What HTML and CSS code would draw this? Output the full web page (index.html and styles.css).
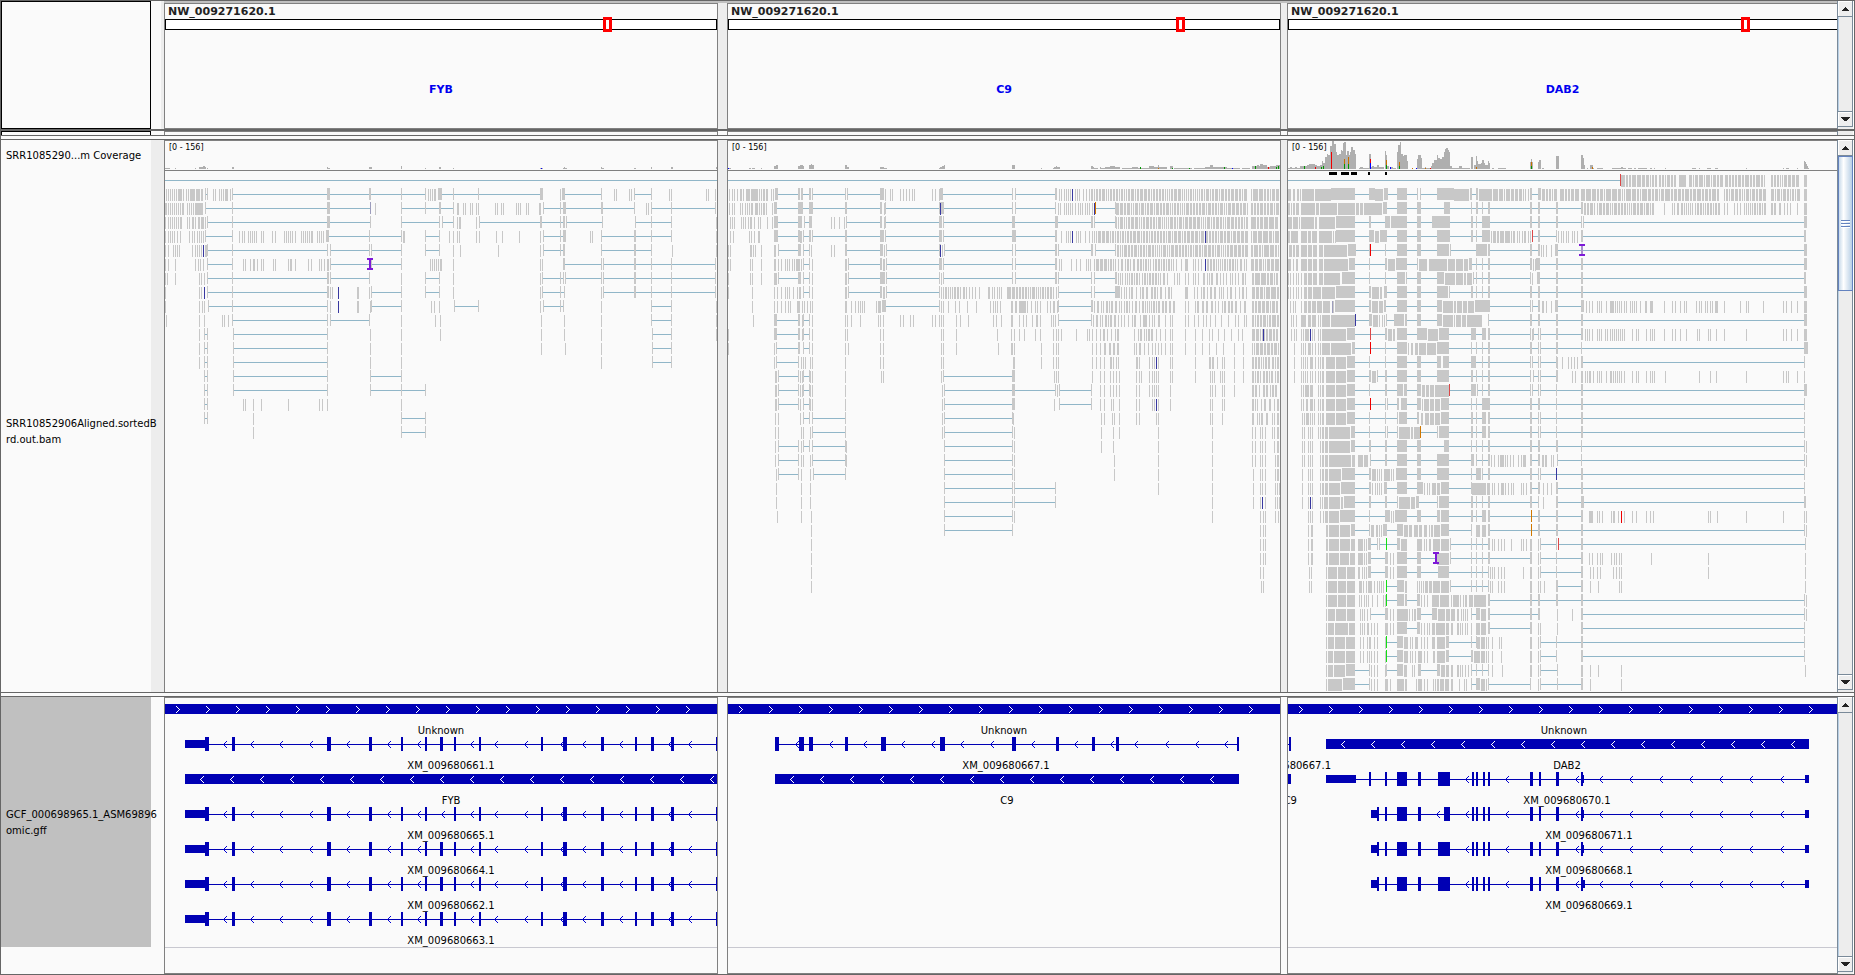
FILE: index.html
```html
<!DOCTYPE html>
<html lang="en">
<head>
<meta charset="utf-8">
<title>Genome browser</title>
<link rel="stylesheet" href="styles.css">
</head>
<body>
<main class="browser">

  <section class="band band-header">
    <div class="corner"></div>
    <div class="gutter"></div>
    <div class="panels">
      <div class="panel">
        <div class="chrom">NW_009271620.1</div>
        <div class="ideogram"><span class="locus" style="left:79.5%"></span></div>
        <div class="gene-name">FYB</div>
      </div>
      <div class="gap"></div>
      <div class="panel">
        <div class="chrom">NW_009271620.1</div>
        <div class="ideogram"><span class="locus" style="left:81.3%"></span></div>
        <div class="gene-name">C9</div>
      </div>
      <div class="gap gap-narrow"></div>
      <div class="panel panel-last">
        <div class="chrom">NW_009271620.1</div>
        <div class="ideogram"><span class="locus" style="left:82.5%"></span></div>
        <div class="gene-name">DAB2</div>
      </div>
    </div>
    <div class="scroll">
      <button class="arrow" aria-label="Scroll up"><svg width="7" height="4"><path d="M3 0h1v1h1v1h1v1h1v1H0V3h1V2h1V1h1z"/></svg></button>
      <div class="rail"></div>
      <button class="arrow arrow-down" aria-label="Scroll down"><svg width="9" height="4"><path d="M0 0h9v1H8v1H7v1H6v1H3V3H2V2H1V1H0z"/></svg></button>
    </div>
  </section>

  <section class="band band-strip">
    <div class="corner"></div>
    <div class="gutter"></div>
    <div class="panels">
      <div class="panel"></div><div class="gap"></div>
      <div class="panel"></div><div class="gap gap-narrow"></div>
      <div class="panel panel-last"></div>
    </div>
    <div class="scroll"></div>
  </section>

  <div class="divider"></div>

  <section class="band band-reads">
    <div class="names">
      <div class="name name-coverage">SRR1085290...m Coverage</div>
      <div class="name name-reads">SRR10852906Aligned.sortedB<br>rd.out.bam</div>
    </div>
    <div class="gutter"></div>
    <div class="panels">
      <div class="panel"><svg class="track" id="reads-fyb"></svg></div>
      <div class="gap"></div>
      <div class="panel"><svg class="track" id="reads-c9"></svg></div>
      <div class="gap gap-narrow"></div>
      <div class="panel panel-last"><svg class="track" id="reads-dab2"></svg></div>
    </div>
    <div class="scroll">
      <button class="arrow" aria-label="Scroll up"><svg width="7" height="4"><path d="M3 0h1v1h1v1h1v1h1v1H0V3h1V2h1V1h1z"/></svg></button>
      <div class="rail"><div class="thumb"><i></i><i></i><i></i></div></div>
      <button class="arrow arrow-down" aria-label="Scroll down"><svg width="9" height="4"><path d="M0 0h9v1H8v1H7v1H6v1H3V3H2V2H1V1H0z"/></svg></button>
    </div>
  </section>

  <div class="divider"></div>

  <section class="band band-genes">
    <div class="names">
      <div class="name name-genes">GCF_000698965.1_ASM69896<br>omic.gff</div>
    </div>
    <div class="gutter"></div>
    <div class="panels">
      <div class="panel"><svg class="track" id="genes-fyb"></svg></div>
      <div class="gap"></div>
      <div class="panel"><svg class="track" id="genes-c9"></svg></div>
      <div class="gap gap-narrow"></div>
      <div class="panel panel-last"><svg class="track" id="genes-dab2"></svg></div>
    </div>
    <div class="scroll">
      <button class="arrow" aria-label="Scroll up"><svg width="7" height="4"><path d="M3 0h1v1h1v1h1v1h1v1H0V3h1V2h1V1h1z"/></svg></button>
      <div class="rail"></div>
      <button class="arrow arrow-down" aria-label="Scroll down"><svg width="9" height="4"><path d="M0 0h9v1H8v1H7v1H6v1H3V3H2V2H1V1H0z"/></svg></button>
    </div>
  </section>

</main>
<script src="tracks.js"></script>
</body>
</html>
```

FILE: styles.css
```css
* { box-sizing: border-box; }

body {
  margin: 0;
  background: #fafafa;
  color: #000;
  font-family: "DejaVu Sans", Verdana, sans-serif;
  font-size: 10px;
}

.browser {
  display: flex;
  flex-direction: column;
  min-height: 100vh;
  border: 1px solid #666;
}

.band { display: flex; }
.band-header { height: 130px; border-bottom: 2px solid #666; }
.band-strip { height: 4px; overflow: hidden; }
.band-reads { flex: 1 0 552px; }
.band-genes { height: 277px; }

.divider {
  height: 5px;
  border-top: 1px solid #666;
  border-bottom: 1px solid #666;
}

.corner {
  flex: 0 0 150px;
  border: 1px solid #000;
}
.band-strip .corner { border-bottom: 0; }

.gutter { flex: 0 0 13px; }
.band-header .gutter { border-right: 3px solid #ededed; }
.band-reads .gutter { background: #ededed; }

.panels {
  flex: 1;
  display: flex;
  min-width: 0;
}
.band-header .panels { border-top: 2px solid #c0c0c0; }

.panel {
  flex: 554 1 554px;
  min-width: 0;
  border: 1px solid #808080;
  overflow: hidden;
}
.panel-last { flex: 550 1 550px; border-right: 0; }
.band-strip .panel { border-bottom: 0; }
.band-reads .panel { border-bottom: 0; }

.gap { flex: 0 0 9px; }
.gap-narrow { flex-basis: 6px; }
.band-header .gap,
.band-reads .gap { background: #ededed; }

.chrom {
  padding-left: 3px;
  height: 15px;
  line-height: 15px;
  font-size: 11px;
  font-weight: bold;
  color: #222;
}
.ideogram {
  position: relative;
  height: 11px;
  border: 1px solid #000;
  background: #fff;
}
.panel-last .ideogram { border-right: 0; }
.locus {
  position: absolute;
  top: -3px;
  width: 9px;
  height: 15px;
  border: 3px solid #f00;
}
.gene-name {
  margin-top: 52px;
  line-height: 16px;
  font-size: 11px;
  font-weight: bold;
  text-align: center;
  color: #0000f0;
}

.names {
  flex: 0 0 150px;
  width: 150px;
  z-index: 1;
  display: flex;
  flex-direction: column;
}
.name {
  align-content: center;
  padding-left: 5px;
  line-height: 16px;
  white-space: nowrap;
}
.name-coverage { height: 31px; }
.name-reads { flex: 1; }
.name-genes { height: 250px; padding-top: 2px; background: #c0c0c0; }

.track {
  display: block;
  width: 100%;
  height: 100%;
  shape-rendering: crispEdges;
}
.track text { font-size: 10px; }
.track .range { font-size: 8px; }

.scroll {
  flex: 0 0 17px;
  display: flex;
  flex-direction: column;
  padding: 0 0 2px;
  border-left: 1px solid #7a8a99;
  background: #ededed;
  border-right: 1px solid #fff;
}
.arrow {
  height: 16px;
  padding: 0;
  display: flex;
  align-items: center;
  justify-content: center;
  border: 1px solid #7a8a99;
  border-width: 0 1px 1px 0;
  background: #eee;
  box-shadow: inset 1px 1px #fff;
}
.arrow-down { border-width: 1px 1px 1px 0; }
.arrow svg { fill: #222; display: block; }
.rail {
  flex: 1;
  border-right: 1px solid #7a8a99;
  border-left: 1px solid #b8cfe5;
}
.thumb {
  height: 135px;
  margin: 0 -1px;
  display: flex;
  flex-direction: column;
  align-items: center;
  justify-content: center;
  gap: 1px;
  border: 1px solid #6382bf;
  background: linear-gradient(to right, #c8daea, #fff 35%, #b8cfe5);
}
.thumb i {
  width: 9px;
  height: 2px;
  border-top: 1px solid #6382bf;
  background: #fff;
}
```

FILE: tracks.js
```js
const NS = "http://www.w3.org/2000/svg";
const COLORS = {
  read: "#c8c8c8", intron: "#90b6c8", cover: "#afafaf",
  b: "#3838a0", r: "#dc4848", R: "#f00000", o: "#d07800", g: "#14e014", v: "#9c9cbc",
  G: "#009600", O: "#c87000", B: "#0000ff"
};

function add(svg, tag, attrs, text) {
  const el = document.createElementNS(NS, tag);
  for (const k in attrs) el.setAttribute(k, attrs[k]);
  if (text) el.textContent = text;
  svg.appendChild(el);
}
function rect(svg, x, y, w, h, fill) {
  add(svg, "rect", { x, y, width: w, height: h, fill });
}
/* Converts bin positions to pixels of one panel. */
function scaler(origin, scale, left) {
  return u => Math.floor(origin + u / scale - left + 0.2);
}
function seeded(seed) {
  let s = seed * 7919 + 13;
  return n => { s = (s * 1103515245 + 12345) % 2147483648; return Math.floor(s / 65536) % n; };
}

/* Row syntax: "10" tick, "10-20" block, "10~30" spliced, "10%90:7" packed reads,
   a letter after a tick gives the mismatch colour. */
function drawRow(svg, text, y, px, seed) {
  const marks = [];
  let lines = "", blocks = "";
  for (const token of text.trim().split(/\s+/)) {
    if (token.includes("%")) {
      const [range, d] = token.split(":");
      const [a, b] = range.split("%").map(v => px(+v));
      const next = seeded(seed + a);
      let x = a;
      while (x < b) {
        const w = Math.min(b - x, d >= 9 ? 1 + next(5) : d >= 8 ? 1 + next(4) : d >= 7 ? 1 + next(3) : d >= 5 ? 1 + next(2) : 1);
        blocks += `M${x} ${y - 5}h${w}v12h-${w}z`;
        x += w + (d >= 7 ? 1 : d >= 6 ? 1 + (next(4) ? 0 : 1) : d >= 5 ? 1 + next(3) : 1 + next(6));
      }
      continue;
    }
    const parts = token.split("~");
    const dy = parts.length > 1 ? 6 : 5;
    let last = null;
    for (const part of parts) {
      const m = part.match(/^(\d+)(?:-(\d+))?([a-zA-Z]?)$/);
      const a = px(+m[1]), b = Math.max(a + 1, m[2] ? px(+m[2]) : 0);
      if (last !== null) lines += `M${last} ${y}h${a - last}v1h-${a - last}z`;
      if (m[3]) marks.push([a, m[3], dy]);
      else blocks += `M${a} ${y - dy}h${b - a}v12h-${b - a}z`;
      last = b;
    }
  }
  add(svg, "path", { d: lines || "M0 0", fill: COLORS.intron });
  add(svg, "path", { d: blocks || "M0 0", fill: COLORS.read });
  for (const [x, c, dy] of marks) rect(svg, x, y - dy, 1, 12, COLORS[c]);
}

function drawReads(id, left, tiles, cover, spots, cpx) {
  const svg = document.getElementById(id);
  const top = 141;
  for (const [a, b, h] of cover) {
    const x = cpx(a);
    rect(svg, x, 169 - top - h, Math.max(1, cpx(b) - x), h, COLORS.cover);
  }
  for (const [a, low, high, c] of spots) rect(svg, cpx(a), 169 - top - high, 1, high - low, COLORS[c]);
  rect(svg, 0, 170 - top, "100%", 1, "#808080");
  for (const tile of tiles)
    tile.rows.forEach((row, i) => {
      const n = tile.first + i;
      if (row) drawRow(svg, row, 180 + 14 * n - top, scaler(tile.origin, tile.scale, left), n);
    });
  add(svg, "text", { x: 4, y: 9, class: "range" }, "[0 - 156]");
  return svg;
}
function insertion(svg, x, row, stem) {
  const y = 180 + 14 * row - 141 - 6, c = "#7d19d7";
  rect(svg, x, y, 6, 2, c);
  rect(svg, x, y + 10, 6, 2, c);
  rect(svg, x + 2, y + 2, 2, 8, stem || c);
}

/* ---- FYB ---- */
const fybLeft = [
 "400~1830",
 "420 425 430-433 436 441 446 450-460 464 471 476 481-493 497-506 508-515 518~525 540 545 555 559 564 571-577 583 588~827-836~934-940~1015~1076 1083 1088 1093 1098-1104 1108-1118~1147-1150~1210-1213~1367-1373",
 "417-422 425 431 436 441 446 450 455 460-465 474 479 485 490 495-515 518-521~588-591~827-836~936v 949 1015-1018~1076~1111-1117~1147-1150 1157-1162 1171 1176 1189 1194 1204 1209-1213 1253 1258 1268 1273 1305 1310 1315 1331 1336 1363-1368 1373~1416",
 "417-421 425 430 435 440 446 450 455 459 474 479 486 490 495 501 505 510-516 519 525~588-591~827-836~936 1015-1018~1112-1114 1118~1147-1150 1156 1161 1164 1205 1212~1367-1372~1416",
 "417-421 425 430 437 442 449 455 479 486 492 498 503 508 513 518~588-591 605 613 618 627-631 632 637-640 642-645 648 661 666 689 696 719 724 729 733-737 740 747 762 767-770 772 777 781 788-793 803 808 813 818 824-834~934-937~1015 1020-1024 1076~1112 1137 1147 1157 1162-1165 1205 1212 1255-1258 1271 1314 1367 1373~1416",
 "417-421 426 439 444 449 454 487 494 499 504 509 513b 519-524 525~588~827-831 836~934 939~1015 1076~1111-1114 1147 1164 1260 1367 1373~1416",
 "417-421 426 444 494 502-505 507-510 514 525~588 616 621 632-636 640-645 651 661 666 691 696 729-732 735-738 747 780 787 808 813 820 827-832 836~940~1015 1088 1093 1098 1103 1108 1113 1117 1147 1367 1371",
 "417-421 423 444 504 509 517 525~588~827-832 836~934-937 1015 1076~1111 1147 1367 1371~1416",
 "417 504 510 517b 525~588~827-832 835 841 856b 904-908 934 939~1015 1076~1111 1147 1367 1371~1416",
 "417 504 511 517 527~588~829 836 856b 904-908 936 939~1015 1090-1094 1099 1111 1150~1210 1367 1373~1416",
 "421 504 517 562 568 578 588~829 836~934-937 1015 1102 1114 1369"
];
const fybRight = [
 "",
 "1 6-17~124-128 163 169 208 214 223~274 328 334 439 445 466",
 "0~10-19~124-130~223 259 265 274~334-338~467-470",
 "0~10-15 18~126 226~274~334-338 470",
 "0~10-18 91 97 124-128~223-228~274~334-338 470",
 "0~10-17 124-128~223-228~274 337 470",
 "10-17~124 130~223-228~274~334-338~467-470",
 "0~10-14 17~124 130~223-228~274~334-338~467",
 "0~12 124 130~223-228~274~334-338~467",
 "0~10-14 124 274~334 469",
 "13 124 274~334 469"
];
const fybLow = [
 "429 439~446 501~703 796-798 862 946 1163 1212 1292 1401~1441 1539",
 "429 439~446 501~703 796 862 1163 1215 1292 1401~1441",
 "429 439~446 501~703 796 862 1292 1401~1441",
 "439~446 501~703 796~862",
 "439~446 501~703 796~862~914",
 "439~446 523 527 545-547 562 620 686 693 703 862",
 "439~446 545 862~914",
 "545 862~914"
];
const fyb = drawReads("reads-fyb", 165, [
  { first: 0, origin: 0, scale: 2.529, rows: fybLeft },
  { first: 0, origin: 560, scale: 3, rows: fybRight },
  { first: 11, origin: 0, scale: 2.148, rows: fybLow }
], [[417,430,1],[444,446,1],[494,496,1],[503,515,2],[515,518,3],[518,522,2],[525,528,1],[588,592,2],[827,831,2],[831,836,1],[934,941,2],[1014,1018,3],[1075,1077,1],[1111,1117,2],[1147,1150,1],[1367,1375,1],[1424,1434,1],[1427,1430,2],[1520,1524,2],[1524,1528,1],[1604,1608,1],[1646,1649,2],[1697,1703,2],[1811,1813,2]],
 [[1369,0,1,"B"]], scaler(0, 2.529, 165));
insertion(fyb, 202, 6);

/* ---- C9 ---- */
const c9Rows = [
 "10~1560",
 "26 34 40 48 56-61 64-68 72 76-82 86-89 90-96 98-104 108 114 118 122 126 130 141 148 153-160~216-220 225-230~247-250 255~345 350~442-451 455 469 474 496 504 512 521 529 535 584 592 603 607-615~805-808 812~923-929 933 939 946 952 957 963 969b 977 984 989 1000 1008 1016 1022%1452:7 1461%1540:9",
 "26 34 40 56 62 69 75 80 86-91 96 101-104 108 114 118 123 128 144 150-159~216-220 222-228~247-256~345-351~442-447 451 455~603-616~805-808 812~923-926 931 937 946 952 958 963 969 978 986 992 998 1004 1011 1016 1024 1030b 1033o~1088 1090%1452:7 1461%1540:9 606b",
 "29 34 40 59 65 70 77 82-90 93 104 110 129 145 150-160~216-227 231~247-255 307 315 328 342 347-351~442-447 451 455~603-612 614-618~805-811~923-932~1022-1026 1030~1088 1090%1452:7 1461%1540:9",
 "29 36-40 81 87 93 106-112 150-160~216-220 222-227 229~247-250 255~345-351~442-451 455~603-612 615~805-811 812~923-929 939 953 958 965 969b 979 986 991 1005 1017 1024 1029 1036%1452:7 1335b 1461%1540:9",
 "23 29 82 87 92 97 114 150-156 160~216-223 229~247 252 307 315 345-350~442-450 453 457~603-610 612 617~805-808 812~923-929 932~1022-1028 1032~1088 1093%1452:7 1461%1540:9 606b",
 "23 29 82 89 114 150-156 160 170 180 186 192 198 205 210-222 225 229~247 255 345-350 354~442-447 450-454 457~603-612 615-618~805-808 812~923-929 933 939 967 980 990 1008 1014 1020 1029%1090:7 1096%1260:6 1270 1281-1288 1302 1308 1317 1325 1335b 1341%1452:6 1461%1540:9",
 "23 82 89 114 150-157 160~216-223 229~247 255 345-350 354~442-454 457~603 608 614-618~805-808 812~923-929 932~1022-1025 1030~1088-1092 1097%1240:6 1250 1257 1264 1281 1288 1302 1308 1315 1330%1452:5 1463%1540:9",
 "23 89 150 157 169 180 185 191 202 213 219-223 229~247 255 345-350 354~442-447 450-454 457~603 610%657:6 662%697:6 702 714 738-743 749 755 763 769 775 791-801 803%920:7 925-929 932~1022-1025 1030~1088-1100 1104%1252:5 1281-1288 1304%1452:5 1463%1540:9",
 "89 150 157 169 180 188 194 213-222 226 233 240 248 255 345-350 362 371-375 381 387 392 397 430 436-445 447-457~603 609 614 628 647 657 681 705 744 752 758 764 772 800-806 813-818 822-842 846 857 867 872 880 900 909 917-923 928 932~1022-1027 1031%1252:6 1281 1288 1307%1452:5 1463%1540:8",
 "92 150-157~216-222 226 229~247 255 345 350 362 386 436 441 449 496 504 524 532 584 592 603 608 614 650 661 683 752 761 775 802-808 824 835 843 858 869 874 881 912 918 923 930~1022 1026%1090:6 1096 1105 1112 1122 1134 1140-1146 1155 1165-1175 1180%1220:5 1226 1240 1245 1281 1288 1304%1452:4 1463%1540:8",
 "23 150-157~216-222 226 229~247 255 345 350 442 449 608 614 650 763 802 810 824 837 868 881 918 926 932 939 980 1011 1016 1024 1034 1046%1098:5 1140%1220:5 1226 1240 1245 1281 1308 1328 1346%1452:4 1463%1540:7 1495b",
 "23 150 155-159~216-222 229~247 255 345 353 442 449 608 614 650 766 802-806 810 884 918 926 932 1024 1034 1046%1098:5 1140%1200:5 1206 1214 1225 1240 1245 1281 1308 1328 1346%1400:4 1415 1440 1463%1540:7",
 "150 155-159~216 224 229 235 248 255 345 442 449 609 614 806-811 884 918 926 932 1024 1034 1046 1056 1074-1078 1083 1090 1096 1144 1149 1154 1180 1189 1194 1200b 1206 1240 1245 1308 1346%1372:5 1383 1388 1415 1440 1463%1540:6",
 "152-157 160~216 222 226 229~247 249 255 345 444 449 609 614~805-811 920 926 932 1024 1046 1056 1075 1083 1090 1099 1146 1153 1160 1180 1189 1194 1200 1206 1240 1245 1308 1349 1354 1360 1376 1383 1388 1415 1440 1463%1540:6",
 "152-157 160~216 221 226 229~247 249 255 345 612 617~805-811~923 927 934~1022 1046 1058 1075 1083 1090 1099 1146 1153 1181 1189 1194 1200 1206 1240 1349 1354 1362 1383 1388 1415 1465%1540:5",
 "152-157 160~216 221 229~247 249 255 345 612 617~805-811 920 934~1022 1046 1058 1077 1083 1099 1146 1153 1190 1194 1200b 1206 1240 1349 1354 1383 1388 1465%1540:5",
 "152 160 221 229~247 255~345 612 617~805 808 1049 1057 1079 1084 1099 1146 1153 1200 1206 1349 1354 1383 1465%1510:5 1519 1525 1534-1539",
 "152 160 224 229 248 255~345 612 617~805 810 1049 1082 1099 1206 1354 1465 1473 1485-1488 1493 1500 1519 1525 1533-1538",
 "152 160~216 224 229~247 255~345 348 617~805 810 1049 1082 1206 1354 1465 1473 1485-1488 1493 1500 1525 1533-1538",
 "152 160~216 224 229 248 255~345 348 617~805 810 1085 1206 1354 1465 1473 1487 1493 1500 1528 1534-1538",
 "155 160~216 224 249 258~345 617~805 810 1085 1206 1354 1468 1487 1493 1500 1528 1534-1538",
 "155 224 249 617~805 810~923 1206 1354 1468 1487 1493 1500 1528 1533 1539",
 "155 224 249 617~805 810~923 1354 1468 1487 1493b 1500 1528 1533 1539",
 "158 224 251 617~805 810 1354 1487 1495 1500 1528 1537",
 "251 617~805 1487 1495 1500",
 "251 1487 1495 1500",
 "251 1487 1495 1500",
 "251 1487 1495",
 "251 1490 1495"
];
drawReads("reads-c9", 728, [{ first: 0, origin: 720, scale: 2.751, rows: c9Rows }],
 [[24,30,1],[80,85,1],[88,96,1],[113,116,1],[149,155,3],[154,161,4],[215,222,3],[221,228,4],[228,231,3],[246,250,4],[250,254,5],[254,259,4],[345,349,4],[349,355,2],[441,453,2],[453,459,1],[602,611,1],[607,616,2],[611,616,3],[616,619,4],[803,813,4],[883,886,1],[916,922,1],[921,929,2],[925,929,3],[929,935,2],[1021,1026,3],[1026,1030,2],[1030,1042,1],[1045,1050,2],[1050,1060,1],[1060,1100,2],[1075,1088,3],[1106,1135,1],[1135,1150,2],[1150,1180,1],[1180,1195,3],[1195,1230,2],[1205,1208,4],[1238,1246,3],[1250,1300,1],[1305,1335,1],[1335,1345,2],[1345,1350,2],[1350,1358,4],[1358,1395,2],[1395,1430,1],[1437,1458,1],[1463,1485,3],[1478,1483,4],[1485,1495,5],[1495,1505,4],[1505,1515,2],[1515,1530,3],[1530,1541,4]],
 [[23,0,1,"B"],[1155,0,2,"G"],[1205,0,1,"O"],[1243,0,1,"G"],[1291,0,1,"G"],[1387,0,2,"G"],[1409,0,1,"B"],[1472,0,3,"G"],[1508,0,2,"R"],[1531,0,2,"G"],[1536,0,3,"G"]],
 scaler(720, 2.751, 728));

/* ---- DAB2 ---- */
const dabRows = [
 "10~928r 931%1030:8 1033%1080:7 1088-1107 1115%1210:8 1213%1325:8 1339%1420:7 1429-1439",
 "22 26-30 35-38 40-43 46-52 55 60-93 95-131 133-139 141-204~243-259 261-283 285-294~319-346~374 382~428-474 476-499 501-516 518-525~534-541 543-579 581%660:9 664 670 676 682-689~704-712 714%760:9 764%820:8 821%1200:9 1211%1325:7 1339%1420:7 1429-1439",
 "22-28 30-33 36-43 45-52 57-95 98-108 111-155 158-204 207-217 220-226 229-256 258-280 283-292~319-346~374-384~447-465~521-525~534-540~551~567-573~682-687~704-711~753-760~821-828 830%860:7 864%1020:7 1048 1069%1200:6 1211 1220 1238 1248 1255 1265%1325:6 1339%1396:5 1412 1429-1439",
 "22-33 35-49 52 57-93 95-103 106-150 153-204~243-248~286-300 303-346~374-384~414-464~521-526~534~551-573~682-687~704-711~753-760~821 827~1430-1439",
 "22-29 31-38 40-49 57-74 76-86 88-103 106-142 145 150 153-205~243-256 259-270 273-292~319-346~374-384~428-464~521-526~534~551-573 575-578 581-590 593-598 600-611 614-627 630 635-643 648 653 660 665-671 676 683 688r~704-711~753 758 767 772 781 786 796 803 811 821-828~1429-1436",
 "24-33 35-41 44-52 57-74 76-88 91-103 106-117 120-184 187-206~243 286-291~319-346~374-384~428-462 465~534-564 567-573~682-689~704-709 713 719 725 740 750-760~821-828~1429-1437 206~246R~286",
 "22-32 36 44-49 57-74 76-87 90-103 106-117 120-185 188-206~243~286-292 295-314 317-346~374-376 379-403 406-457 459-479 482-501 503-514 517-525~534~551~567-573~682-687 690 695 700-711~753-760~821-828~1429-1439",
 "22 27 36 44 50 57-62 65-74 76-87 90-103 106-117 120-165 169-206~243~286-291~319-341 344-348~374-384~428-449 452-479 482-499 502-507 510-525 528~534-539~551~567-573~682 687-692 701-709~753-760~821-828~1429-1436",
 "22 27 36 44 50 57-62 65-74 76-87 90-113 116-150 153-204~243-250 253-270 273-280 284-292~319-346~374-384~428-459 462-465~521-526~534-539~551~567-573~682-687~704-711~753-760~821-828~1429-1437",
 "28 36 42 57-62 65-74 76-86 88-98 101-115 118-138 143v 146 151-204~243-250 253-267 270-282 285-291~319-346~374-384~428-442 444-472 474-481 484-496 499-510 513-530 533-573~682 687~704-711 714 719 725 740 750-760~821-831 834 844 851 866 871 877 890 901-911 914 919 926 932 939 944 955 962 967 972 983 995 1000 1010-1019 1048 1070 1079 1092 1102 1108 1135 1144 1149 1160 1166 1173 1179 1187-1196 1212 1256 1271 1278 1318 1373 1382 1393 1411 1429-1437",
 "32 37 44 57 62-73 76-85 88-98 104 110 115-136 139-204 206b~243-251 254-268 272 279 285 291~311-338 341-346~374-384~428-442 444-472 474-479 482-494 497-508 511-553 568~682-687~704-711~753-760~821-828~1429-1437",
 "32 39 44 57 64 70-80 83b 88 94 104 110 115-180 183-206~246r~286-292 295-305 308-315 319-346~374-401 404-431 434-463~521-536~551-563 567-573~682 687 691~704 709~753-760~821-828 833 838 844 851 866 871 877 886 892 901 907 912 918 923 928 934 940 960 971 977 999 1010 1015 1020 1048 1070 1078 1092 1108 1138 1144 1168 1174 1190 1212 1271 1373 1382 1395 1411 1429-1437",
 "39 57 63 69 76-85 88 96 104 110 115-136 139-194 197-206~246R~286-291~319-346 349 357-363 368-378 380-398 401-425 428-463~521-525~534~551-555~567-573~682-689~704 710~753-760~821-825~1429-1440",
 "39 57 63 69 75 82-92 96 104 110 115-122 125-150 153-180 183-206~243~286-291~319-348~374-384~428-441 444-463~521-536~551~567-573~682 688~704 710~753 757 770 786 795 803 811 821-828~1429-1433",
 "39 57 63 69 75 82 88 96 104 110 115-122 125-150 153-180 183-206~243-250 253-262 265-269~286-292~319-346~374-384~428-463~521-526~534~551-555~567-573~682 691~704 710~753-760 796 805 821-828 833 838 844-850 854 866 871 877 890 901-906 910 914 919 926 932 939 960 971 977 999 1010 1015 1021 1051 1144 1174 1190-1193 1271 1373 1382 1387 1411 1429-1433",
 "57 63 69-80 83-92 104 110 115-122 125-150 153-180 183-206~243~286-293~319-335 338-348~374-384 388-395 398-408 411-420 423-461 463r~521-534 538~551~567-573~682 688~704 710~753-757~821-828~1429-1437",
 "57 63 71-76 82-90 94 104 110 115-122 125-150 153-180 183-206~246R~286 293~319-326 330-348~374-384 387 394-408 411-420 423-438 441-463~521-525~534~551-573~682-689~704-710~753-757~821-828~1429-1433",
 "61 67 71-79 83 88 94 104 110 115-122 125-150 153-180 183-206~243~286-291~319-322 325-348~374-381 385-392 395-408 411-420 423-438 441-463~521-526~534~551-563 567-573~682-687~704 710~753-757~821-826~1429-1433",
 "61 67 77 83 88 104 110 115-121 124-131 134-192 195-206~243~286 293~319-322 325-354 357-364 367-382 383o~428 434-463~521-526~534~551-563 567-573~682-687~704 710~753-757~821-826~1429-1433",
 "61 67 77 83 88 110 115-121 124-131 134-192 195-206~243-248~286-292~319-346~374-384~447-463~521-525~534~551~567-573~682-687~704-711~753-760~821-825~1429 1435",
 "61 67 77 83 88 110 115-121 124-131 134-194 197-206 213-226 229-241 246~286-293~319-346~374-384~428-463~521-531 534-539~551~567-573 576 584 594 602-611 614 620 628 636 650 658 663-671 682-689~704-711 714-720 723-728 740 746 755-760~821-825~1429 1435",
 "61 77 83 88 110 115-121 124-131 134-166 169-204~243-250 253-262 265 271 277 284-300 303 309 316-346~374-384~428 431-463~521-525~534-548 551-555~567-573~682-687~704 710~754b~821-828~1429-1433",
 "61 77 83 88 110 115-121 124-131 134-164 167-204~243-250 253 259 265 271 277 285-293~319-346~374-390 393 401 408 416-425 428-438 441-463~521 525-562 565-573 578 584 594 603-611 614 622 632 636 658 664 672 682-689~704-711 718 729 740 753-760~821-828~1429-1433",
 "61 77 83b 88 110 115-118 121-131 134-164 167-172 175-206~243-248~286-293~319-322 325-354 357-369 372-381~428-431 434-463~521-526~534~551~567-573~682-687~704 718 753-760~821-831~1429-1436",
 "77 83 88 110 118 124-131 134-162 165-206~243~286-300 303 309 315-346~374-384~428-438 441-463~521-526~534~551-563 567-573~685o~704-711~753-760~821-828 844-854 866 871 879 904 909-915 922 931R 939 962 971 999 1010 1018 1168 1174 1193 1271 1373 1430 1435",
 "77 86-90 125-131 134-161 164-191 194-206~243 249-258 262-267 270 276 283-292~319-335 338-349 352-362 365-378 381-389 393-403 406-411 413-417 420-436 439-463~521-525 534-547 551-563 567-573~685o~704-711~753-760~821-828~1430 1435",
 "77 86-90 125-131 134-161 164-191 194-206 213-226 229 235 241-248~265 271~290g~319-328 331-346 374-384 386 393 400 407-412 417-436 439-463 465~521-525~534-539~551~567-573 578 584 594 603 611 631 658 663 672 682-689 704 711~753 759r~821-828~1433-1436",
 "77 86-90 125-131 134-161 164-189 192-205 213-226 229 235 241-248~286-296 300 308 319-346~374-384~424 428-461 465~521-525~534-539~551~567-573~682-687 704 709~753-757~821-828 844 851 866 873 879 904 912 918 925 931 1013 1168 1433-1436",
 "80 86 125-128 131-155 158-180 183-205 213-220 224 230 236 241-248~286-296 300 308 319-346~374-384~431-461~521-525~534-539~551~567 573 578 584 594 603 612 664 682-687 704 711~753-757~821-828 846 854 866 873 909 917 925 931 1168 1433-1436",
 "80 86 125-128 131-155 158-180 183-205 215-224 228 236 241-253 256 264 271 277 283 290g~319-338 341-346 374 380 386 392 397-405 408-414 417-436 439-463 465~521-525~534-539~551~567 573 578 595 603 612 682-687 704 711 721 753-760~821-828 846-850 868 925 931 1433-1436",
 "125-128 131-155 158-180 183-205 215 221 229 236 241 253 265 282 287 290g~319-338 341-348~374-382 386 393 401-405 414-435 438-463 466 473-490 493 500 505-512 515-528 531-563 567-573~682-687~704-711~753-760~821-828~1430 1435",
 "125-128 131-150 153-180 183-205 219 225 231 237 246~286-296 300 308 319-349 352 360 365-372 375-384~414-428 431-450 453-464 467-478 483-490 494 500 505 511 521-525~534-547 550-562 567-573~682-687~704-711 755 797 821-828~1430 1435",
 "125-128 131-147 150-185 188-205 219 225 231 237 241 249 257 265 286-296 300 308 319-348~374-382 386 393 401 407 414-424 427-450 453-463 466-473 483-490 493 498 505 511 521-525 534-545 548-562 568-573~682-687 704 710 755 821-828~1430",
 "125-128 131-147 150-177 180-205 219 226 237 243-250 257 265 286 290g~319-335 338-349 356 362 368-378 385 393 401 414-424 428-450 453-463~521-525~534 538-547 550-559 562 568 578 598 603 682-687 704 710~753-757~821-828~1430",
 "125-128 131-144 147-177 180-205 219 226 237 243 249 257 265 286 290g~319-335 338-349 356 362 368 376-387 393 402 417-424 428-450 453-463~521-528 531-547 550-559 562 568 578 603 682-687 704 710~753-757 821-828~1430",
 "125-128 131-144 147-177 180-204~243 249 257 265 286 290~319-335 338-346 361 367 376-384~428-438 441-450 453-463 466-473 483-490 493 498 505 513 521-525~534-539~551~567 578 606 682-687 704 710~755 821-828 846-850 868 931 1433",
 "125-128 131-170 173-204~243 249 257 265 286-296 300 319-338 341-346 371 376-387 393 402 418 424 428-435 438-447 450-461 466-472 488-493 502 508 521-525~534-547 550-559 562 568~682 704 710~755~821-828 846-850 931"
];
const dab = drawReads("reads-dab2", 1288, [{ first: 0, origin: 1280, scale: 2.727, rows: dabRows }],
 [[22,55,1],[28,34,2],[42,48,2],[56,70,3],[70,75,3],[75,80,4],[80,95,5],[95,103,4],[103,110,3],[110,115,4],[115,119,8],[119,124,6],[124,129,12],[129,133,15],[133,138,14],[138,142,23],[142,147,28],[147,150,25],[150,154,25],[154,157,17],[157,162,14],[162,166,15],[166,169,19],[169,172,18],[172,175,26],[175,180,27],[180,184,14],[184,188,18],[188,191,14],[191,195,17],[195,201,22],[201,205,19],[205,207,15],[215,243,1],[219,228,2],[243,248,15],[250,285,2],[252,256,3],[265,270,4],[276,280,2],[286,290,18],[290,293,14],[293,297,3],[300,318,1],[304,310,2],[319,323,17],[323,327,24],[327,330,27],[330,334,15],[334,336,15],[336,340,13],[340,346,14],[346,349,8],[374,378,10],[378,384,14],[384,386,11],[388,412,1],[395,400,2],[412,416,3],[416,420,6],[420,428,9],[428,433,14],[433,438,11],[438,443,10],[443,447,12],[447,452,17],[452,454,20],[454,458,21],[458,460,19],[460,465,17],[465,469,3],[469,520,1],[488,496,3],[521,526,12],[529,534,4],[534,538,13],[538,542,8],[542,548,5],[548,552,6],[552,556,9],[556,561,6],[561,567,4],[567,570,8],[570,573,6],[578,584,1],[594,616,1],[682,684,7],[684,687,10],[687,690,7],[704,707,7],[706,712,9],[716,722,1],[753,761,13],[821,823,12],[823,826,14],[826,829,11],[829,832,4],[838,842,1],[845,855,4],[855,858,1],[864,882,1],[905,944,1],[930,935,2],[950,962,1],[967,972,1],[976,1002,1],[1009,1014,1],[1020,1024,1],[1050,1053,1],[1125,1134,1],[1143,1147,1],[1165,1175,1],[1188,1194,1],[1271,1275,1],[1373,1376,1],[1382,1388,1],[1411,1414,1],[1429,1432,8],[1432,1434,7],[1434,1437,5],[1437,1440,3],[1440,1443,1]],
 [[66,0,3,"G"],[96,0,2,"R"],[113,0,2,"G"],[118,0,3,"G"],[140,0,17,"R"],[176,0,5,"G"],[176,5,10,"O"],[186,0,5,"G"],[186,5,12,"O"],[246,0,6,"B"],[246,6,10,"R"],[290,0,4,"G"],[290,4,9,"O"],[301,0,2,"B"],[326,0,3,"G"],[326,3,7,"O"],[361,0,1,"O"],[372,0,1,"B"],[396,0,1,"O"],[410,0,1,"R"],[535,0,2,"O"],[685,0,3,"G"],[685,3,7,"O"],[852,0,2,"O"]],
 scaler(1280, 2.727, 1288));
for (const [x, w] of [[41,8],[53,8],[63,6],[80,2],[97,2]]) rect(dab, x, 31, w, 3, "#000");
insertion(dab, 291, 5, "#a890cc");
insertion(dab, 145, 27);

/* ---- Gene models ---- */
const BLUE = "#0000b4";
function chevron(svg, x, y, dir, color) {
  const d = dir > 0
    ? `M${x} ${y - 3}h1v1h1v1h1v1h1v1h-1v1h-1v1h-1v1h-1v-1h1v-1h1v-1h1v-1h-1v-1h-1v-1h-1z`
    : `M${x + 4} ${y - 3}h-1v1h-1v1h-1v1h-1v1h1v1h1v1h1v1h1v-1h-1v-1h-1v-1h-1v-1h1v-1h1v-1h1z`;
  add(svg, "path", { d, fill: color });
}
function bar(svg, x1, x2, y, first, count, dir) {
  rect(svg, x1, y, x2 - x1, 10, BLUE);
  for (let i = 0; i < count; i++) chevron(svg, first + 30 * i, y + 5, dir, "#fff");
}
function transcript(svg, px, y, from, to, thick, exons, arrows) {
  rect(svg, px(from), y + 7, px(to) - px(from), 1, BLUE);
  for (const a of arrows) chevron(svg, px(a), y + 7, -1, "#0000d2");
  for (const [a, b] of thick) rect(svg, px(a), y + 3, px(b) - px(a), 8, BLUE);
  for (const [a, b] of exons) rect(svg, px(a), y, Math.max(2, px(b) - px(a)), 14, BLUE);
}
function label(svg, x, y, text, anchor) {
  add(svg, "text", { x, y, "text-anchor": anchor || "middle" }, text);
}
function geneTrack(id) {
  const svg = document.getElementById(id);
  rect(svg, 0, 249, "100%", 1, "#c8c8d0");
  return svg;
}

const gf = geneTrack("genes-fyb"), pf = scaler(0, 2.148, 165);
bar(gf, 0, 2000, 6, 11, 18, 1);
label(gf, 276, 36, "Unknown");
const fybExons = [[440,449],[500,505],[702,711],[793,799],[861,866],[913,917],[945,952],[975,979],[1029,1033],[1162,1168],[1209,1218],[1291,1297],[1364,1368],[1400,1405],[1443,1448],[1538,1541]];
const fybArrows = [480,537,601,665,744,832,897,1011,1062,1127,1203,1251,1331,1435,1479];
transcript(gf, pf, 39, 397, 1541, [[397,440]], fybExons, fybArrows);
label(gf, 286, 71, "XM_009680661.1");
bar(gf, 20, 552, 76, 35, 18, -1);
label(gf, 286, 106, "FYB");
["XM_009680665.1", "XM_009680664.1", "XM_009680662.1", "XM_009680663.1"].forEach((name, i) => {
  const skip = i === 0;
  transcript(gf, pf, 109 + 35 * i, 397, 1541, [[397,440]],
    skip ? fybExons.filter(e => e[0] !== 945) : fybExons, skip ? [...fybArrows, 947] : fybArrows);
  label(gf, 286, 141 + 35 * i, name);
});

const gc = geneTrack("genes-c9"), pc = scaler(720, 2.727, 728);
bar(gc, 0, 2000, 6, 11, 18, 1);
label(gc, 276, 36, "Unknown");
transcript(gc, pc, 39, 150, 1415, [], [[150,161],[215,229],[243,254],[341,349],[439,453],[600,614],[796,807],[916,924],[1014,1023],[1080,1088],[1410,1415]],
  [205,297,392,495,577,656,738,850,967,1065,1131,1213,1295,1376]);
label(gc, 278, 71, "XM_009680667.1");
bar(gc, 47, 511, 76, 62, 15, -1);
label(gc, 279, 106, "C9");

const gd = geneTrack("genes-dab2"), pd = scaler(1280, 2.727, 1288);
bar(gd, 0, 2000, 6, 11, 18, 1);
label(gd, 276, 36, "Unknown");
transcript(gd, pd, 39, 22, 30, [], [[25,30]], []);
label(gd, 43, 71, "680667.1", "end");
bar(gd, 0, 3, 76, 0, 0, -1);
label(gd, 9, 106, "C9", "end");
bar(gd, 38, 521, 41, 53, 16, -1);
label(gd, 279, 71, "DAB2");
const tail = [[524,529],[534,540],[554,559],[567,573],[682,690],[706,712],[753,761],[821,826]];
const dabArrows = [506,615,804,872,953,1035,1117,1199,1281,1363];
const head = [[286,292],[319,346],[376,385]];
transcript(gd, pd, 74, 125, 1443, [[125,207],[826,829],[1432,1443]], [[243,248], ...head, [431,464], ...tail], dabArrows);
label(gd, 279, 106, "XM_009680670.1");
transcript(gd, pd, 109, 248, 1443, [[248,265],[826,829],[1432,1443]], [[265,270], ...head, [447,464], ...tail], [427, ...dabArrows]);
label(gd, 301, 141, "XM_009680671.1");
transcript(gd, pd, 144, 248, 1443, [[248,265],[826,829],[1432,1443]], [[265,270], ...head, [431,464], ...tail], dabArrows);
label(gd, 301, 176, "XM_009680668.1");
transcript(gd, pd, 179, 248, 1443, [[248,265],[826,832],[1432,1443]], [[265,270], ...head, [431,464], ...tail], dabArrows);
label(gd, 301, 211, "XM_009680669.1");
```
